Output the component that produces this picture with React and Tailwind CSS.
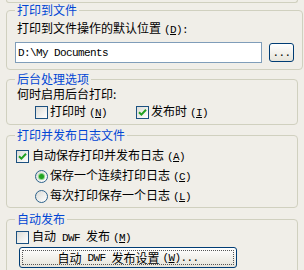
import React from 'react';

const cjk = "font-['Noto_Sans_CJK_SC','Noto_Sans',sans-serif]";
const mono = "font-['Liberation_Mono',monospace] text-[11px] tracking-[-0.6px]";

const Key = ({ k, tail = '' }) => (
  <span className={`${mono} ml-[3px]`}>
    (<span className="underline underline-offset-[1px]">{k}</span>){tail}
  </span>
);

const Check = ({ checked }) => (
  <span className="inline-flex w-[13px] h-[13px] shrink-0 items-center justify-center border border-[#1C5180] bg-linear-to-br from-[#DCDCD7] to-white">
    {checked && (
      <svg width="9" height="9" viewBox="0 0 9 9">
        <path d="M1 4.2 L3.4 6.6 L8 1.8" stroke="#21A121" strokeWidth="2" fill="none" />
      </svg>
    )}
  </span>
);

const Radio = ({ checked }) => (
  <span className="inline-flex w-[13px] h-[13px] shrink-0 items-center justify-center rounded-full border border-[#2C628B] bg-linear-to-br from-[#DCDCD7] to-white">
    {checked && <span className="w-[5px] h-[5px] rounded-full bg-[#21A121] shadow-[0_0_0_1px_#8ED68E]" />}
  </span>
);

const Group = ({ title, className = '', children }) => (
  <fieldset className={`border border-[#D0D0BF] rounded-[4px] pl-[8px] pr-[8px] ${className}`}>
    <legend className="ml-[0px] px-[2px] text-[12px] leading-[14px] text-[#0046D5]">{title}</legend>
    {children}
  </fieldset>
);

export default function App() {
  return (
    <div className={`w-[304px] h-[270px] overflow-hidden bg-[#F0EEE8] px-[6px] text-[12px] leading-[14px] text-black ${cjk}`}>
      <div className="h-[3px] border border-t-0 border-[#D0D0BF] rounded-b-[4px]" />

      <Group title="打印到文件" className="pb-[6px]">
        <div className="mt-[4px] ml-[2px]">
          打印到文件操作的默认位置<Key k="D" tail=":" />
        </div>
        <div className="mt-[5px] flex items-center gap-[7px]">
          <div className="w-[247px] h-[21px] border border-[#7F9DB9] bg-white flex items-center pl-[2px]">
            <span className={mono}>D:\My Documents</span>
          </div>
          <button className="w-[25px] h-[19px] rounded-[3px] border border-[#003C74] bg-linear-to-b from-white to-[#E6E4DA] flex items-end justify-center pb-[3px]">
            <span className={`${mono} leading-[10px]`}>...</span>
          </button>
        </div>
      </Group>

      <Group title="后台处理选项" className="mt-[2px] pb-[4px]">
        <div className="mt-[1px] ml-[2px]">何时启用后台打印:</div>
        <div className="mt-[3px] ml-[20px] flex items-center">
          <label className="w-[101px] flex items-center gap-[2px]">
            <Check />
            <span>打印时<Key k="N" /></span>
          </label>
          <label className="flex items-center gap-[2px]">
            <Check checked />
            <span>发布时<Key k="I" /></span>
          </label>
        </div>
      </Group>

      <Group title="打印并发布日志文件" className="mt-[3px] pb-[3px]">
        <label className="mt-[6px] ml-[1px] flex items-center gap-[3px]">
          <Check checked />
          <span>自动保存打印并发布日志<Key k="A" /></span>
        </label>
        <label className="mt-[4px] ml-[20px] flex items-center gap-[2px]">
          <Radio checked />
          <span>保存一个连续打印日志<Key k="C" /></span>
        </label>
        <label className="mt-[4px] ml-[20px] flex items-center gap-[2px]">
          <Radio />
          <span>每次打印保存一个日志<Key k="L" /></span>
        </label>
      </Group>

      <Group title="自动发布" className="mt-[4px] pb-[5px]">
        <label className="mt-[3px] ml-[1px] flex items-center gap-[3px]">
          <Check />
          <span>
            自动<span className={`${mono} mx-[6px]`}>DWF</span>发布<Key k="M" />
          </span>
        </label>
        <button className="mt-[2px] ml-[4px] w-[218px] h-[21px] rounded-[3px] border border-[#003C74] bg-linear-to-b from-white to-[#E6E4DA] flex items-center justify-center p-[2px]">
          <span className="w-full h-full flex items-center justify-center border border-dotted border-[#555] rounded-[1px]">
            自动<span className={`${mono} mx-[6px]`}>DWF</span>发布设置<Key k="W" tail="..." />
          </span>
        </button>
      </Group>
    </div>
  );
}
